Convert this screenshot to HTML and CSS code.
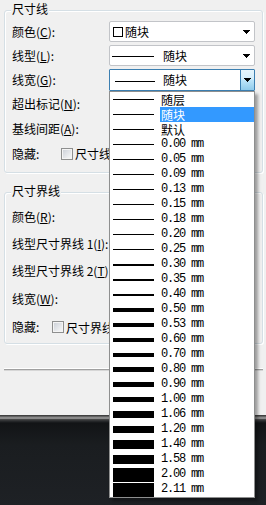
FILE: index.html
```html
<!DOCTYPE html>
<html lang="zh-CN">
<head>
<meta charset="utf-8">
<title>尺寸线</title>
<link rel="stylesheet" href="styles.css">
</head>
<body>
<div class="panel">
  <section class="group g1">
    <div class="title">尺寸线</div>
    <div class="row crow">
      <span class="lbl">颜色(<u>C</u>):</span>
      <div class="combo c1"><span class="swatch"></span><span class="ctext">随块</span><span class="btn"><svg width="7" height="4" viewBox="0 0 7 4"><path d="M0 0h7v1h-1v1h-1v1h-1v1h-1v-1h-1v-1h-1v-1h-1z"/></svg></span></div>
    </div>
    <div class="row crow">
      <span class="lbl">线型(<u>L</u>):</span>
      <div class="combo c2"><span class="cline"></span><span class="ctext">随块</span><span class="btn"><svg width="7" height="4" viewBox="0 0 7 4"><path d="M0 0h7v1h-1v1h-1v1h-1v1h-1v-1h-1v-1h-1v-1h-1z"/></svg></span></div>
    </div>
    <div class="row crow focus">
      <span class="lbl">线宽(<u>G</u>):</span>
      <div class="combo c3"><span class="cline"></span><span class="ctext">随块</span><span class="btn"><svg width="7" height="4" viewBox="0 0 7 4"><path d="M0 0h7v1h-1v1h-1v1h-1v1h-1v-1h-1v-1h-1v-1h-1z"/></svg></span>
        <ul class="list">
          <li class="opt"><span class="smp w1"></span><span class="txt">随层</span></li>
          <li class="opt sel"><span class="smp w1"></span><span class="txt">随块</span></li>
          <li class="opt"><span class="smp w1"></span><span class="txt">默认</span></li>
          <li class="opt"><span class="smp w1"></span><span class="txt mm">0.00 mm</span></li>
          <li class="opt"><span class="smp w1"></span><span class="txt mm">0.05 mm</span></li>
          <li class="opt"><span class="smp w1"></span><span class="txt mm">0.09 mm</span></li>
          <li class="opt"><span class="smp w1"></span><span class="txt mm">0.13 mm</span></li>
          <li class="opt"><span class="smp w1"></span><span class="txt mm">0.15 mm</span></li>
          <li class="opt"><span class="smp w1"></span><span class="txt mm">0.18 mm</span></li>
          <li class="opt"><span class="smp w1"></span><span class="txt mm">0.20 mm</span></li>
          <li class="opt"><span class="smp w1"></span><span class="txt mm">0.25 mm</span></li>
          <li class="opt"><span class="smp w2"></span><span class="txt mm">0.30 mm</span></li>
          <li class="opt"><span class="smp w2"></span><span class="txt mm">0.35 mm</span></li>
          <li class="opt"><span class="smp w2"></span><span class="txt mm">0.40 mm</span></li>
          <li class="opt"><span class="smp w4"></span><span class="txt mm">0.50 mm</span></li>
          <li class="opt"><span class="smp w4"></span><span class="txt mm">0.53 mm</span></li>
          <li class="opt"><span class="smp w4"></span><span class="txt mm">0.60 mm</span></li>
          <li class="opt"><span class="smp w4"></span><span class="txt mm">0.70 mm</span></li>
          <li class="opt"><span class="smp w5"></span><span class="txt mm">0.80 mm</span></li>
          <li class="opt"><span class="smp w5"></span><span class="txt mm">0.90 mm</span></li>
          <li class="opt"><span class="smp w5"></span><span class="txt mm">1.00 mm</span></li>
          <li class="opt"><span class="smp w7"></span><span class="txt mm">1.06 mm</span></li>
          <li class="opt"><span class="smp w7"></span><span class="txt mm">1.20 mm</span></li>
          <li class="opt"><span class="smp w9"></span><span class="txt mm">1.40 mm</span></li>
          <li class="opt"><span class="smp w9"></span><span class="txt mm">1.58 mm</span></li>
          <li class="opt"><span class="smp w14"></span><span class="txt mm">2.00 mm</span></li>
          <li class="opt"><span class="smp w14"></span><span class="txt mm">2.11 mm</span></li>
        </ul>
      </div>
    </div>
    <div class="row trow"><span class="lbl">超出标记(<u>N</u>):</span></div>
    <div class="row trow"><span class="lbl">基线间距(<u>A</u>):</span></div>
    <div class="row trow"><span class="lbl short">隐藏:</span><span class="chk"></span><span>尺寸线 1(<u>M</u>)</span></div>
  </section>

  <section class="group g2">
    <div class="title">尺寸界线</div>
    <div class="row r26"><span class="lbl">颜色(<u>R</u>):</span><div class="combo"></div></div>
    <div class="row r27"><span class="lbl">线型尺寸界线 1(<u>I</u>):</span><div class="combo"></div></div>
    <div class="row r28"><span class="lbl">线型尺寸界线 2(<u>T</u>):</span><div class="combo"></div></div>
    <div class="row r28"><span class="lbl">线宽(<u>W</u>):</span><div class="combo"></div></div>
    <div class="row r28"><span class="lbl short">隐藏:</span><span class="chk"></span><span>尺寸界线 1(<u>1</u>)</span></div>
  </section>

  <div class="sep"></div>
</div>
<div class="taskbar"></div>
</body>
</html>
```

FILE: styles.css
```css
* { box-sizing: border-box; }
html, body { margin: 0; padding: 0; }
body {
  width: 266px;
  height: 505px;
  overflow: hidden;
  background: #1d2024;
  font-family: "Noto Sans CJK SC", "Noto Sans", sans-serif;
  font-size: 12px;
  color: #000;
}
u { text-decoration: underline; text-underline-offset: 1px; }

.panel {
  height: 415px;
  background: #f0f0f0;
  padding: 10px 3px 0 4px;
  overflow: visible;
}

.group {
  position: relative;
  border: 1px solid #d5dfe5;
  border-radius: 3px;
  box-shadow: inset 1px 1px 0 #fff, 1px 1px 0 #fff;
}
.g1 { padding: 10px 7px 6px 7px; }
.g2 { margin-top: 19px; padding: 11px 7px 2px 7px; }

.title {
  position: absolute;
  top: -9px;
  left: 6px;
  padding: 0 1px;
  background: #f0f0f0;
  line-height: 14px;
}

.row { display: flex; align-items: center; }
.crow { height: 21px; }
.crow + .crow { margin-top: 3px; }
.crow.focus { height: 22px; }
.trow { height: 25px; }
.r26 { height: 26px; }
.r27 { height: 27px; }
.r28 { height: 28px; }

.lbl {
  width: 97px;
  flex: none;
  white-space: nowrap;
  line-height: 14px;
}
.lbl.short { width: 49px; }
.g2 .lbl.short { width: 40px; }

.combo {
  position: relative;
  flex: none;
  width: 146px;
  height: 21px;
  display: flex;
  align-items: center;
  background: #fff;
  border: 1px solid #c2c4c8;
  border-radius: 2px;
  padding-left: 3px;
  line-height: 14px;
}
.focus .combo { height: 22px; }
.c2 { padding-left: 2px; }
.c3 { padding-left: 5px; border-color: #3c7fb1; border-radius: 1px; }

.swatch {
  width: 10px;
  height: 10px;
  border: 1px solid #000;
  margin-right: 2px;
  flex: none;
}
.cline {
  width: 42px;
  height: 1px;
  margin-top: 2px;
  margin-right: 9px;
  background: #000;
  flex: none;
}
.c3 .cline { width: 40px; margin-right: 8px; }
.ctext { white-space: nowrap; }

.btn {
  margin-left: auto;
  width: 14px;
  align-self: stretch;
  display: flex;
  align-items: center;
  justify-content: center;
  padding-right: 2px;
}
.btn svg { display: block; fill: #000; }
.c3 .btn {
  padding-right: 0;
  border-left: 1px solid #3c7fb1;
  background: linear-gradient(#e6f5fc 0%, #d4eefb 45%, #bde5f9 50%, #8fcbeb 100%);
}

.chk {
  width: 12px;
  height: 12px;
  flex: none;
  margin-right: 2px;
  border: 1px solid #8e8f8f;
  background: linear-gradient(135deg, #c9ced6 0%, #eceef0 70%, #f8f8f8 100%);
  box-shadow: inset 0 0 0 1px #f4f4f4;
}

.list {
  position: absolute;
  top: calc(100% + 1px);
  left: -1px;
  z-index: 10;
  width: 146px;
  margin: 0;
  padding: 0;
  list-style: none;
  background: #fff;
  border: 1px solid #8e8f8f;
  box-shadow: 3px 3px 3px rgba(0, 0, 0, 0.35);
}
.opt {
  height: 15px;
  display: flex;
  align-items: center;
}
.smp {
  width: 41px;
  margin-left: 3px;
  background: #000;
  flex: none;
}
.w1 { height: 1px; }
.w2 { height: 2px; }
.w4 { height: 4px; }
.w5 { height: 5px; }
.w7 { height: 7px; }
.w9 { height: 9px; }
.w14 { height: 14px; }
.txt {
  margin-left: 6px;
  padding-left: 1px;
  flex: 1;
  align-self: stretch;
  line-height: 15px;
  white-space: nowrap;
}
.sel .txt { background: #3399ff; color: #fff; }
.mm {
  font-family: "Liberation Mono", monospace;
  letter-spacing: -1.2px;
}

.sep {
  margin-top: 24px;
  height: 3px;
  border-top: 1px solid #fff;
  border-bottom: 1px solid #d6d6d6;
  background: #a0a0a0;
}

.taskbar {
  height: 90px;
  background: linear-gradient(to bottom,
    #474747 0px, #3a3a3a 1px,
    #8a8a8a 2px, #8a8a8a 4px,
    #4e4e4e 4px, #2a2c2e 6px,
    #121416 8px, #1a1d20 30px, #1e2125 100%);
}
```
